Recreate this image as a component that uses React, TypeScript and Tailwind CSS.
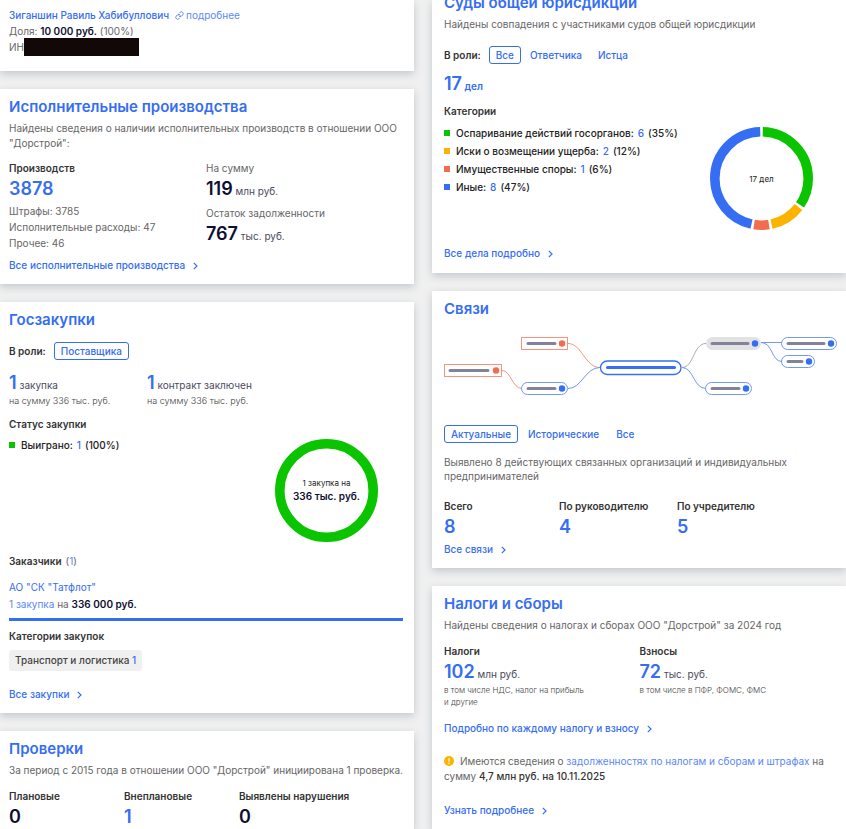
import { ReactNode } from "react";
import clsx from "clsx";
import { Link as LinkIcon } from "lucide-react";

type Slice = { label: string; count: number; percent: number; color: string };

const COURT_SLICES: Slice[] = [
  { label: "Оспаривание действий госорганов", count: 6, percent: 35, color: "#0ac400" },
  { label: "Иски о возмещении ущерба", count: 2, percent: 12, color: "#fab400" },
  { label: "Имущественные споры", count: 1, percent: 6, color: "#f26c4f" },
  { label: "Иные", count: 8, percent: 47, color: "#356df3" },
];

const PURCHASE_SLICES: Slice[] = [
  { label: "Выиграно", count: 1, percent: 100, color: "#0ac400" },
];

function Card({ children, className }: { children: ReactNode; className?: string }) {
  return (
    <section
      className={clsx(
        "bg-white pr-[11px] shadow-[0_3px_8px_rgba(90,110,120,0.3)]",
        className,
      )}
    >
      {children}
    </section>
  );
}

function Title({ children }: { children: ReactNode }) {
  return (
    <h2 className="text-[15px] leading-5 font-semibold text-[#356df3]">
      <a href="#">{children}</a>
    </h2>
  );
}

function Label({ children, className }: { children: ReactNode; className?: string }) {
  return (
    <h3 className={clsx("font-semibold leading-[15px] text-[#333]", className)}>
      {children}
    </h3>
  );
}

function Figure({
  value,
  unit,
  dark,
}: {
  value: ReactNode;
  unit?: string;
  dark?: boolean;
}) {
  return (
    <p className="h-[25px] leading-[25px] whitespace-nowrap text-[#4a4a5e]">
      <span
        className={clsx(
          "text-[18px] font-semibold",
          dark ? "text-[#0f0f33]" : "text-[#356df3]",
        )}
      >
        {value}
      </span>
      {unit && <> {unit}</>}
    </p>
  );
}

function MoreLink({ children, className }: { children: ReactNode; className?: string }) {
  return (
    <div className={clsx("flex leading-4 font-medium", className)}>
      <a href="#" className="flex items-center gap-2 text-[#356df3]">
        {children}
        <svg width="5" height="8" viewBox="0 0 5 8" fill="none" className="mt-px">
          <path d="M0.8 0.8 4 4 0.8 7.2" stroke="currentColor" strokeWidth="1.2" />
        </svg>
      </a>
    </div>
  );
}

function Chip({ children, active }: { children: ReactNode; active?: boolean }) {
  return (
    <button
      type="button"
      className={clsx(
        "h-[18px] rounded-[3px] border px-1.5 leading-4 font-medium text-[#356df3]",
        active ? "border-[#356df3]" : "border-transparent",
      )}
    >
      {children}
    </button>
  );
}

function Legend({ slices }: { slices: Slice[] }) {
  return (
    <ul className="leading-[18px] font-medium text-[#222]">
      {slices.map(({ label, count, percent, color }) => (
        <li key={label} className="flex items-center">
          <span className="mr-1.5 size-1.5" style={{ backgroundColor: color }} />
          {label}:
          <a href="#" className="mx-1 text-[#356df3]">
            {count}
          </a>
          ({percent}%)
        </li>
      ))}
    </ul>
  );
}

function Donut({ slices, children }: { slices: Slice[]; children: ReactNode }) {
  const gap = slices.length > 1 ? 0.9 : 0;
  let offset = 0;

  return (
    <div className="relative size-[103px] flex-none">
      <svg viewBox="0 0 103 103" className="size-full -rotate-90">
        {slices.map(({ label, percent, color }) => {
          const start = offset;
          offset += percent;
          return (
            <circle
              key={label}
              cx="51.5"
              cy="51.5"
              r="46.7"
              fill="none"
              stroke={color}
              strokeWidth="9.6"
              pathLength="100"
              strokeDasharray={gap ? `${percent - gap} ${100 - percent + gap}` : undefined}
              strokeDashoffset={-(start + gap / 2)}
            />
          );
        })}
      </svg>
      <div className="absolute inset-0 flex flex-col items-center justify-center text-center text-[#222]">
        {children}
      </div>
    </div>
  );
}

function ConnectionsChart() {
  return (
    <svg viewBox="0 0 394 64" fill="none" className="w-full" aria-hidden="true">
      <g stroke="#f7937f">
        <path d="M58 33.5c9 0 10 18 20 18" />
        <path d="M124 6.5c14 0 17 24 32 24" />
        <rect x="0.5" y="27.5" width="57" height="12" />
        <rect x="77.5" y="0.5" width="46" height="12" />
      </g>
      <path d="M238 30.5c12 0 11-24 24-24" stroke="#aaa" />
      <g stroke="#7297f7">
        <path d="M124 51.5c14 0 17-21 32-21" />
        <path d="M238 30.5c12 0 11 21 24 21" />
        <path d="M317 5.5h21M317 5.5c12 0 10 19 21 19" />
        <rect x="77.5" y="45.5" width="46" height="12" rx="6" />
        <rect x="261.5" y="45.5" width="46" height="12" rx="6" />
        <rect x="337.5" y="0.5" width="55" height="12" rx="6" />
        <rect x="337.5" y="18.5" width="33" height="12" rx="6" />
      </g>
      <rect x="262" y="0" width="55" height="13" rx="6.5" fill="#e2e2e2" />
      <rect x="156.5" y="24" width="80.5" height="13.5" rx="6.7" stroke="#356df3" strokeWidth="1.3" />
      <path d="M163.5 30.5h67" stroke="#356df3" strokeWidth="3" strokeLinecap="round" />
      <g stroke="#82839a" strokeWidth="3" strokeLinecap="round">
        <path d="M6 33.5h38M84 6.5h27M84 51.5h27M268 6.5h36M268 51.5h27M344 6.5h36M344 24.5h14" />
      </g>
      <g fill="#f26c4f">
        <circle cx="52" cy="33.5" r="3.2" />
        <circle cx="118" cy="6.5" r="3.2" />
      </g>
      <g fill="#356df3">
        <circle cx="118" cy="51.5" r="3.2" />
        <circle cx="311" cy="6.5" r="3.2" />
        <circle cx="302" cy="51.5" r="3.2" />
        <circle cx="387" cy="6.5" r="3.2" />
        <circle cx="365" cy="24.5" r="3.2" />
      </g>
    </svg>
  );
}

function FounderCard() {
  return (
    <Card className="pt-[7px] pb-4 pl-[9px] leading-4">
      <p className="flex items-center">
        <a href="#" className="font-medium text-[#356df3]">
          Зиганшин Равиль Хабибуллович
        </a>
        <a href="#" className="ml-1.5 flex items-center gap-0.5 text-[#5c88f5]">
          <LinkIcon size={9} className="text-[#356df3]" />
          подробнее
        </a>
      </p>
      <p>
        Доля: <b className="font-semibold text-[#0f0f33]">10 000 руб.</b> (100%)
      </p>
      <p className="flex h-4 items-center">
        ИН
        <span className="h-[18px] w-[115px] bg-[#120808]" />
      </p>
    </Card>
  );
}

function EnforcementCard() {
  return (
    <Card className="pt-2 pb-[11px] pl-[9px]">
      <Title>Исполнительные производства</Title>
      <p className="mt-1">
        Найдены сведения о наличии исполнительных производств в отношении ООО
        "Дорстрой":
      </p>
      <div className="mt-2.5 grid grid-cols-2">
        <div>
          <Label>Производств</Label>
          <Figure value={<a href="#">3878</a>} />
          <ul className="mt-0.5 leading-4">
            <li>Штрафы: 3785</li>
            <li>Исполнительные расходы: 47</li>
            <li>Прочее: 46</li>
          </ul>
        </div>
        <div>
          <p>На сумму</p>
          <Figure value="119" unit="млн руб." dark />
          <p className="mt-[5px]">Остаток задолженности</p>
          <Figure value="767" unit="тыс. руб." dark />
        </div>
      </div>
      <MoreLink className="mt-1.5">Все исполнительные производства</MoreLink>
    </Card>
  );
}

function PurchasesCard() {
  return (
    <Card className="pt-2 pb-[11px] pl-[9px]">
      <Title>Госзакупки</Title>
      <div className="mt-3 flex items-center gap-2">
        <Label>В роли:</Label>
        <Chip active>Поставщика</Chip>
      </div>
      <div className="mt-2.5 grid grid-cols-[138px_1fr]">
        <div>
          <Figure value="1" unit="закупка" />
          <p className="text-[9px] leading-3 font-light text-[#444]">на сумму 336 тыс. руб.</p>
        </div>
        <div>
          <Figure value="1" unit="контракт заключен" />
          <p className="text-[9px] leading-3 font-light text-[#444]">на сумму 336 тыс. руб.</p>
        </div>
      </div>
      <Label className="mt-2.5">Статус закупки</Label>
      <div className="mt-1 flex justify-between pr-[25px]">
        <Legend slices={PURCHASE_SLICES} />
        <div className="pt-[3px]">
          <Donut slices={PURCHASE_SLICES}>
            <span className="text-[8px] leading-3">1 закупка на</span>
            <b className="font-semibold text-[#0f0f33]">336 тыс. руб.</b>
          </Donut>
        </div>
      </div>
      <div className="mt-3 flex gap-1">
        <Label>Заказчики</Label>
        <span>
          (
          <a href="#" className="text-[#5c88f5]">
            1
          </a>
          )
        </span>
      </div>
      <p className="mt-[11px]">
        <a href="#" className="text-[#356df3]">
          АО "СК "Татфлот"
        </a>
      </p>
      <p className="mt-0.5">
        <a href="#" className="text-[#5c88f5]">
          1 закупка
        </a>{" "}
        на <b className="font-semibold text-[#0f0f33]">336 000 руб.</b>
      </p>
      <div className="mt-1.5 h-[3px] bg-[#356df3]" />
      <Label className="mt-2">Категории закупок</Label>
      <div className="mt-1.5 flex">
        <a
          href="#"
          className="rounded-[3px] bg-[#f0f0f0] px-1.5 leading-[21px] font-medium text-[#444]"
        >
          Транспорт и логистика <span className="text-[#356df3]">1</span>
        </a>
      </div>
      <MoreLink className="mt-[15px]">Все закупки</MoreLink>
    </Card>
  );
}

function InspectionsCard() {
  return (
    <Card className="flex-1 pt-2 pl-[9px]">
      <Title>Проверки</Title>
      <p className="-mr-1 mt-1">
        За период с 2015 года в отношении ООО "Дорстрой" инициирована 1 проверка.
      </p>
      <div className="mt-[11px] grid grid-cols-[115px_115px_1fr]">
        <div>
          <Label>Плановые</Label>
          <Figure value="0" dark />
        </div>
        <div>
          <Label>Внеплановые</Label>
          <Figure value="1" />
        </div>
        <div>
          <Label>Выявлены нарушения</Label>
          <Figure value="0" dark />
        </div>
      </div>
    </Card>
  );
}

function CourtsCard() {
  return (
    <Card className="pb-3 pl-3">
      <div className="-mt-[7px]">
        <Title>Суды общей юрисдикции</Title>
      </div>
      <p className="mt-1">Найдены совпадения с участниками судов общей юрисдикции</p>
      <div className="mt-3.5 flex items-center">
        <Label className="mr-2">В роли:</Label>
        <div className="flex gap-0.5">
          <Chip active>Все</Chip>
          <Chip>Ответчика</Chip>
          <Chip>Истца</Chip>
        </div>
      </div>
      <p className="mt-2 h-6 leading-6 font-semibold text-[#356df3]">
        <span className="text-[18px]">17</span> дел
      </p>
      <Label className="mt-2">Категории</Label>
      <div className="mt-[5px] flex justify-between pr-[22px]">
        <Legend slices={COURT_SLICES} />
        <div className="pt-[3px]">
          <Donut slices={COURT_SLICES}>
            <span className="text-[8px] leading-3">17 дел</span>
          </Donut>
        </div>
      </div>
      <MoreLink className="mt-[15px]">Все дела подробно</MoreLink>
    </Card>
  );
}

function ConnectionsCard() {
  return (
    <Card className="pt-2 pb-[11px] pl-3">
      <Title>Связи</Title>
      <div className="-mr-[3px] mt-[18px]">
        <ConnectionsChart />
      </div>
      <div className="mt-6 flex gap-[3px]">
        <Chip active>Актуальные</Chip>
        <Chip>Исторические</Chip>
        <Chip>Все</Chip>
      </div>
      <p className="mt-3 leading-[14px]">
        Выявлено 8 действующих связанных организаций и индивидуальных
        предпринимателей
      </p>
      <div className="mt-4 grid grid-cols-[115px_118px_1fr]">
        <div>
          <Label>Всего</Label>
          <Figure value="8" />
        </div>
        <div>
          <Label>По руководителю</Label>
          <Figure value="4" />
        </div>
        <div>
          <Label>По учредителю</Label>
          <Figure value="5" />
        </div>
      </div>
      <MoreLink className="mt-0.5">Все связи</MoreLink>
    </Card>
  );
}

function TaxesCard() {
  return (
    <Card className="flex-1 pt-2 pl-3">
      <Title>Налоги и сборы</Title>
      <p className="mt-1">Найдены сведения о налогах и сборах ООО "Дорстрой" за 2024 год</p>
      <div className="mt-[11px] grid grid-cols-2">
        <div>
          <Label>Налоги</Label>
          <Figure value="102" unit="млн руб." />
          <p className="text-[8px] leading-3 font-light text-[#444]">
            в том числе НДС, налог на прибыль
            <br />и другие
          </p>
        </div>
        <div>
          <Label>Взносы</Label>
          <Figure value="72" unit="тыс. руб." />
          <p className="text-[8px] leading-3 font-light text-[#444]">
            в том числе в ПФР, ФОМС, ФМС
          </p>
        </div>
      </div>
      <MoreLink className="mt-3">Подробно по каждому налогу и взносу</MoreLink>
      <p className="mt-[18px]">
        <svg width="10" height="10" viewBox="0 0 10 10" className="mr-1.5 inline-block align-[-1px]">
          <circle cx="5" cy="5" r="5" fill="#fab400" />
          <path d="M5 2.2v3.3M5 6.7v1.2" stroke="#fff" strokeWidth="1.3" />
        </svg>
        Имеются сведения о{" "}
        <a href="#" className="text-[#5c88f5]">
          задолженностях по налогам и сборам и штрафах
        </a>{" "}
        на сумму <b className="font-medium text-[#333]">4,7 млн руб. на 10.11.2025</b>
      </p>
      <MoreLink className="mt-[18px]">Узнать подробнее</MoreLink>
    </Card>
  );
}

export default function App() {
  return (
    <main className="grid min-h-screen grid-cols-2 gap-[18px] bg-[#f0f0f0] font-['Inter',sans-serif] text-[10px] leading-[15px] text-[#666]">
      <div className="flex flex-col gap-[18px]">
        <FounderCard />
        <EnforcementCard />
        <PurchasesCard />
        <InspectionsCard />
      </div>
      <div className="flex flex-col gap-[18px]">
        <CourtsCard />
        <ConnectionsCard />
        <TaxesCard />
      </div>
    </main>
  );
}
